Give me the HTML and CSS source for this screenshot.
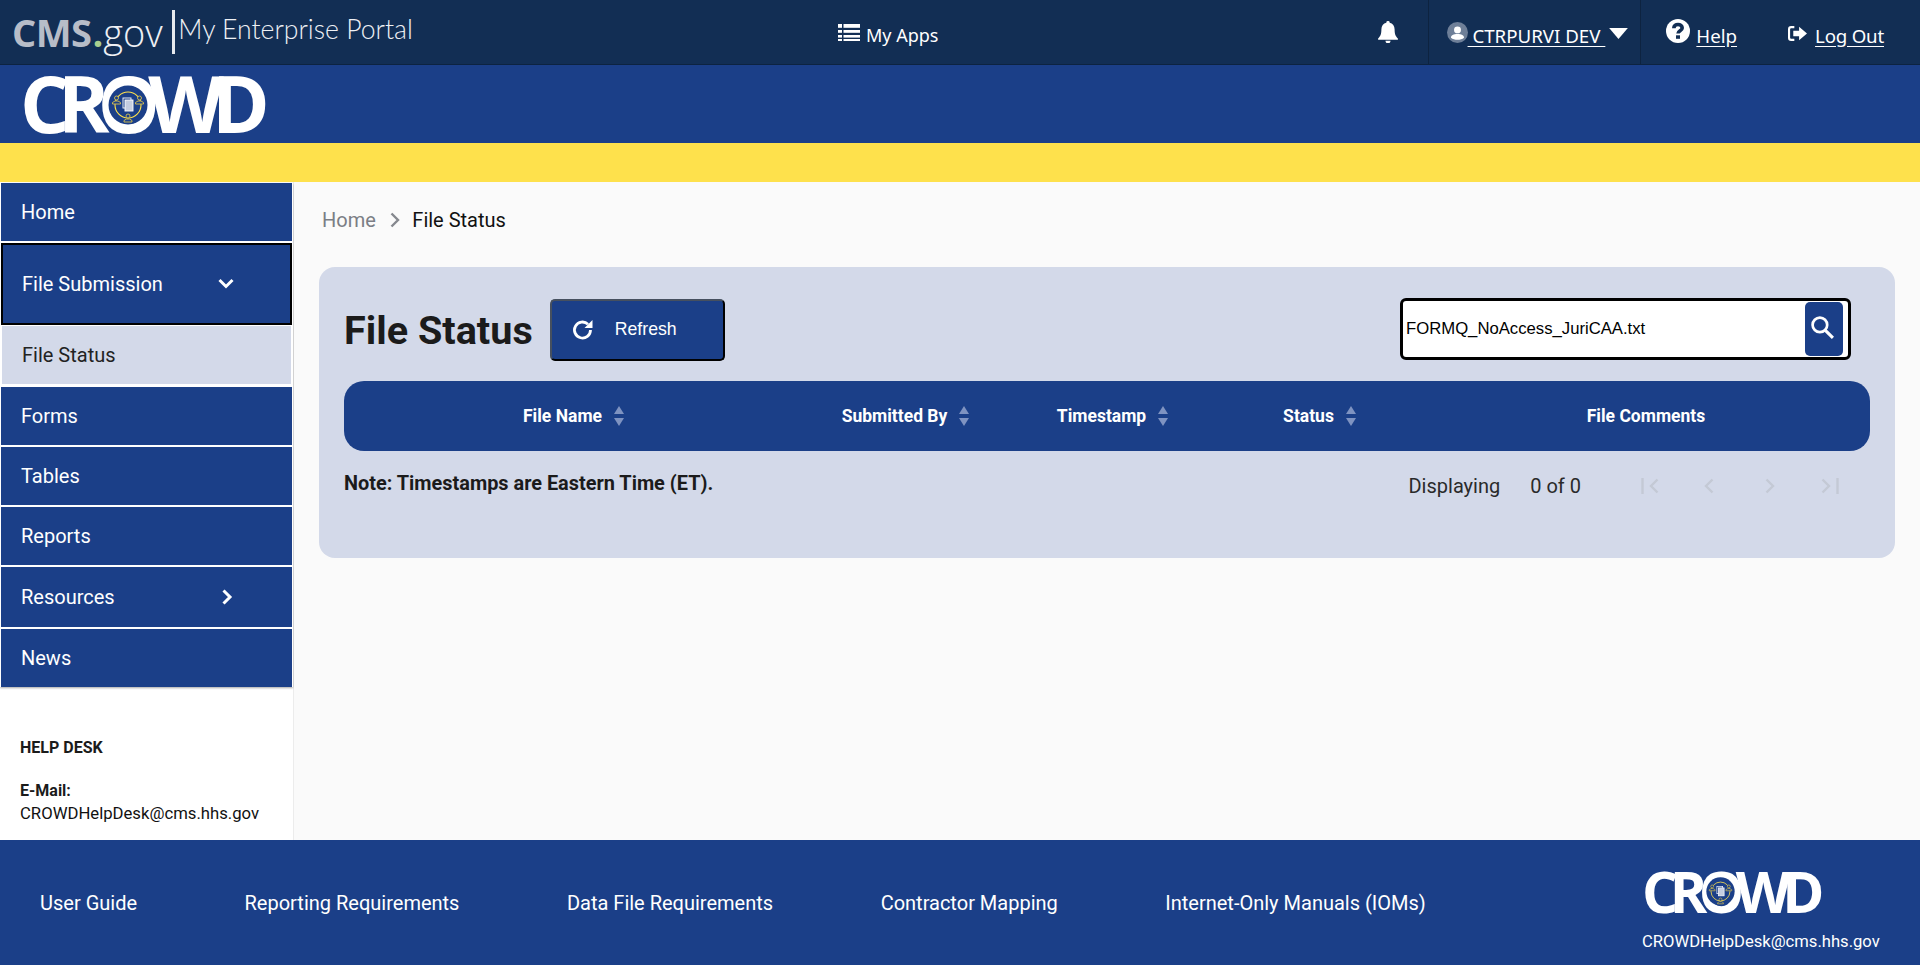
FILE: index.html
```html
<!DOCTYPE html>
<html lang="en">
<head>
<meta charset="utf-8">
<title>File Status</title>
<link rel="stylesheet" href="styles.css">
</head>
<body>
<svg class="defs" width="0" height="0" aria-hidden="true">
  <symbol id="emblem" viewBox="0 0 40 40">
    <circle cx="20" cy="20" r="19.5" fill="#1b3f88"/>
    <circle cx="20" cy="20" r="13" fill="none" stroke="#fee14c" stroke-width="1.100"/>
    <g fill="#1b3f88" stroke="#d9c24f" stroke-width=".9">
      <circle cx="8.5" cy="13" r="2"/><path d="M4.5 19v-1.500l2.500-1.500h3l2.500 1.500V19z"/>
      <circle cx="31.500" cy="13" r="2"/><path d="M27.500 19v-1.500l2.500-1.500h3l2.500 1.500V19z"/>
      <circle cx="20" cy="31" r="2"/><path d="M16 37v-1.500l2.500-1.500h3l2.500 1.500V37z"/>
    </g>
    <rect x="15" y="13" width="8" height="10" fill="none" stroke="#fff" stroke-width=".9"/>
    <rect x="17" y="15" width="8" height="11" fill="#c5cde0" stroke="#fff" stroke-width=".9"/>
  </symbol>
  <symbol id="sort" viewBox="0 0 12 24">
    <path d="M6 2l5 8H1z"/><path d="M1 14h10l-5 8z"/>
  </symbol>
</svg>

<header class="topbar">
  <div class="brand">
    <span class="cms">CMS</span><span class="gov"><span class="dot">.</span>gov</span>
    <span class="brand-sep"></span>
    <span class="portal">My Enterprise Portal</span>
  </div>
  <a class="apps">
    <svg class="apps-icon" viewBox="0 0 22 17" width="22" height="17"><g fill="#fff"><rect x="0" y="0" width="4" height="3.800"/><rect x="5.500" y="0" width="16.500" height="3.800"/><rect x="0" y="6" width="4" height="2.800"/><rect x="5.500" y="6" width="16.500" height="2.800"/><rect x="0" y="11" width="4" height="2.600"/><rect x="5.500" y="11" width="16.500" height="2.600"/><rect x="0" y="15" width="4" height="2"/><rect x="5.500" y="15" width="16.500" height="2"/></g></svg>
    <span>My Apps</span>
  </a>
  <nav class="usernav">
    <span class="bell-cell">
      <svg viewBox="0 0 18 20" width="20" height="22"><path fill="#fff" d="M9 0a1.500 1.500 0 0 1 1.500 1.700C13.300 2.300 15 4.700 15 7.500c0 4.800 1 6.300 3 8.500v1H0v-1c2-2.200 3-3.700 3-8.500 0-2.800 1.700-5.200 4.500-5.800A1.500 1.500 0 0 1 9 0zM6.700 18h4.600a2.300 2.300 0 0 1-4.600 0z"/></svg>
    </span>
    <span class="user-cell">
      <svg class="avatar" viewBox="0 0 20 20" width="21" height="21"><circle cx="10" cy="10" r="10" fill="#6e7f98"/><circle cx="10" cy="7.500" r="3.300" fill="#fff"/><path fill="#fff" d="M3.800 15c0-2.300 2.400-3.500 6.200-3.500s6.200 1.200 6.200 3.500c-1.500 1.300-3.800 2-6.200 2s-4.700-.7-6.200-2z"/></svg>
      <a class="link user-link">&nbsp;CTRPURVI DEV&nbsp;</a>
      <svg class="caret" viewBox="0 0 17 10" width="19" height="11"><path fill="#fff" d="M0 0h17l-8.500 10z"/></svg>
    </span>
    <span class="help-cell">
      <svg class="help-icon" viewBox="0 0 24 24" width="24" height="24"><circle cx="12" cy="12" r="12" fill="#fff"/><path fill="none" stroke="#122e54" stroke-width="3.600" d="M7.800 9.300c0-2.500 1.900-3.800 4.200-3.800s4.200 1.300 4.200 3.400c0 2.900-4.200 2.800-4.200 5.700"/><rect x="10" y="16.300" width="4" height="3.500" fill="#122e54"/></svg>
      <a class="link">Help</a>
    </span>
    <span class="logout-cell">
      <svg class="logout-icon" viewBox="0 0 18 14" width="19" height="15"><path fill="none" stroke="#fff" stroke-width="2" d="M6 1H3a2 2 0 0 0-2 2v8a2 2 0 0 0 2 2h3"/><path fill="#fff" d="M5 4.500h5.500V.5L18 7l-7.500 6.500v-4H5z"/></svg>
      <a class="link">Log Out</a>
    </span>
  </nav>
</header>

<div class="banner">
  <div class="logo logo-lg">
    <span class="logo-text">CROWD</span>
    <svg class="logo-emblem"><use href="#emblem"/></svg>
  </div>
</div>
<div class="stripe"></div>

<div class="body-row">
  <aside class="sidebar">
    <ul class="menu">
      <li class="item">Home</li>
      <li class="item item-open">File Submission
        <svg class="chev" viewBox="0 0 16 11" width="16" height="11"><path fill="none" stroke="#fff" stroke-width="3" d="M1.500 1.500L8 8l6.500-6.500"/></svg>
      </li>
      <li class="subitem">File Status</li>
      <li class="item item-forms">Forms</li>
      <li class="item">Tables</li>
      <li class="item">Reports</li>
      <li class="item item-res">Resources
        <svg class="chev chev-right" viewBox="0 0 11 16" width="11" height="16"><path fill="none" stroke="#fff" stroke-width="3" d="M1.500 1.500L8 8l-6.500 6.500"/></svg>
      </li>
      <li class="item">News</li>
    </ul>
    <div class="helpdesk">
      <p class="help-title">HELP DESK</p>
      <p class="help-label">E-Mail:</p>
      <p class="help-mail">CROWDHelpDesk@cms.hhs.gov</p>
    </div>
  </aside>

  <main class="content">
    <div class="crumbs">
      <span class="crumb-home">Home</span>
      <svg class="crumb-sep" viewBox="0 0 10 16" width="10" height="16"><path fill="none" stroke="#85888e" stroke-width="2.400" d="M1.500 1.500L8 8l-6.500 6.500"/></svg>
      <span class="crumb-cur">File Status</span>
    </div>

    <section class="panel">
      <div class="panel-head">
        <h1 class="title">File Status</h1>
        <button class="refresh" type="button">
          <svg viewBox="0 0 22 22" width="22" height="22"><path fill="none" stroke="#fff" stroke-width="2.800" d="M18.500 11a8 8 0 1 1-2.500-5.800"/><path fill="#fff" d="M20.500 1v8h-8z"/></svg>
          <span>Refresh</span>
        </button>
        <div class="search">
          <input class="search-input" type="text" value="FORMQ_NoAccess_JuriCAA.txt">
          <button class="search-btn" type="button">
            <svg class="search-glyph" viewBox="0 0 24 24" width="25" height="25"><circle cx="9.500" cy="9.500" r="7" fill="none" stroke="#fff" stroke-width="2.600"/><path stroke="#fff" stroke-width="3" d="M14.500 14.500L22 22"/></svg>
          </button>
        </div>
      </div>

      <div class="thead">
        <div class="th">File Name<svg class="sort"><use href="#sort"/></svg></div>
        <div class="th">Submitted By<svg class="sort"><use href="#sort"/></svg></div>
        <div class="th">Timestamp<svg class="sort"><use href="#sort"/></svg></div>
        <div class="th">Status<svg class="sort"><use href="#sort"/></svg></div>
        <div class="th">File Comments</div>
      </div>

      <div class="under">
        <p class="note">Note: Timestamps are Eastern Time (ET).</p>
        <div class="pager">
          <span class="pager-label">Displaying</span>
          <span class="pager-count">0 of 0</span>
          <svg class="pg pg-first" viewBox="0 0 18 16" width="18" height="16"><path fill="none" stroke="#c4c9d5" stroke-width="2.400" d="M1.500 0v16M16.500 1.500L10 8l6.500 6.500"/></svg>
          <svg class="pg pg-prev" viewBox="0 0 11 16" width="11" height="16"><path fill="none" stroke="#c4c9d5" stroke-width="2.400" d="M9.500 1.500L3 8l6.500 6.500"/></svg>
          <svg class="pg pg-next" viewBox="0 0 11 16" width="11" height="16"><path fill="none" stroke="#c4c9d5" stroke-width="2.400" d="M1.500 1.500L8 8l-6.500 6.500"/></svg>
          <svg class="pg pg-last" viewBox="0 0 18 16" width="18" height="16"><path fill="none" stroke="#c4c9d5" stroke-width="2.400" d="M16.500 0v16M1.500 1.500L8 8l-6.500 6.500"/></svg>
        </div>
      </div>
    </section>
  </main>
</div>

<footer class="footer">
  <nav class="foot-links">
    <a>User Guide</a>
    <a>Reporting Requirements</a>
    <a>Data File Requirements</a>
    <a>Contractor Mapping</a>
    <a>Internet-Only Manuals (IOMs)</a>
  </nav>
  <div class="foot-right">
    <div class="logo logo-sm">
      <span class="logo-text">CROWD</span>
      <svg class="logo-emblem"><use href="#emblem"/></svg>
    </div>
    <p class="foot-mail">CROWDHelpDesk@cms.hhs.gov</p>
  </div>
</footer>
</body>
</html>
```

FILE: styles.css
```css
* { box-sizing: border-box; }
html, body { margin: 0; padding: 0; }
body {
  height: 967px;
  overflow: hidden;
  display: flex;
  flex-direction: column;
  background: #fff;
  font-family: Roboto, "Liberation Sans", sans-serif;
  color: #1b1b1b;
}
p, h1, ul { margin: 0; padding: 0; }
.defs { position: absolute; }

/* top bar */
.topbar {
  flex: 0 0 65px;
  display: flex;
  align-items: stretch;
  background: #122e54;
  border-bottom: 1px solid #0d2340;
  color: #fff;
  font-family: "Noto Sans", "Open Sans", sans-serif;
  font-size: 18px;
}
.brand {
  width: 838px;
  display: flex;
  align-items: center;
  padding-left: 12px;
  white-space: nowrap;
}
.cms { font: 700 38px "Open Sans", sans-serif; line-height: 44px; color: #b7bdc8; letter-spacing: -.5px; }
.gov { font: 300 38px "Open Sans", sans-serif; line-height: 44px; color: #eef0f4; margin-left: 1px; }
.dot { color: #a9cf8f; font-weight: 700; }
.brand-sep { width: 3px; height: 44px; background: #e6e9ee; margin: 0 3.500px 0 9px; }
.portal { font: 300 26.600px Lato, sans-serif; color: #eef0f4; position: relative; top: -3px; }
.apps { display: flex; align-items: center; gap: 6px; padding-top: 5px; white-space: nowrap; }
.apps-icon { position: relative; top: -2px; }
.usernav {
  margin-left: auto;
  display: flex;
  align-items: stretch;
  padding-right: 36px;
  font-size: 18.700px;
  white-space: nowrap;
}
.usernav > span { display: flex; align-items: center; }
.link { color: #fff; text-decoration: underline; text-underline-offset: 3px; }
.bell-cell { padding-right: 30px; border-right: 1px solid #0d2340; }
.user-cell { padding: 0 12px 0 18px; border-right: 1px solid #0d2340; }
.user-link { padding-top: 7px; }
.caret { margin-left: 4px; margin-top: 3px; }
.help-cell { padding-left: 25px; }
.help-icon { margin-right: 6px; margin-top: -3px; }
.help-cell .link { padding-top: 7px; }
.logout-cell { padding-left: 51px; }
.logout-icon { margin-right: 8px; margin-top: 3px; }
.logout-cell .link { padding-top: 7px; letter-spacing: -.2px; }

/* logo */
.logo { position: relative; display: block; white-space: nowrap; width: max-content; }
.logo-text {
  font-family: "Open Sans", sans-serif;
  font-weight: 700;
  color: #fff;
  letter-spacing: -.15em;
  display: block;
}
.logo-emblem { position: absolute; }
.logo-lg { font-size: 78px; line-height: 76px; }
.logo-lg .logo-emblem { left: 88px; top: 20px; width: 40px; height: 40px; }
.logo-sm { font-size: 57px; line-height: 52px; }
.logo-sm .logo-emblem { left: 64px; top: 12px; width: 29px; height: 29px; }

/* banner */
.banner { flex: 0 0 78px; background: #1b3f88; padding-left: 20px; }
.stripe { flex: 0 0 39px; background: #fee14c; }

/* layout */
.body-row { flex: 1; display: flex; min-height: 0; }
.sidebar {
  flex: 0 0 294px;
  background: #fff;
  border-right: 1px solid #ececec;
  padding-top: 1px;
}
.menu {
  list-style: none;
  padding: 0 1px 0 1px;
  box-shadow: 0 1px 2px rgba(0,0,0,.35);
}
.item {
  height: 58px;
  margin-bottom: 2px;
  background: #1b3f88;
  color: #fff;
  font-size: 20px;
  display: flex;
  align-items: center;
  padding-left: 20px;
  position: relative;
}
.item:last-child { margin-bottom: 0; }
.item-open {
  height: 82px;
  margin-bottom: 1px;
  border: 2px solid #000;
  padding-left: 19px;
}
.item-res { height: 60px; }
.item-forms { margin-top: 3px; }
.chev { position: absolute; left: 217px; top: 50%; transform: translateY(-50%); }
.item-open .chev { left: 215px; }
.chev-right { left: 221px; }
.subitem {
  height: 58px;
  margin: 0 1px;
  background: #d3d9e9;
  font-size: 20px;
  color: #222;
  display: flex;
  align-items: center;
  padding-left: 20px;
}
.helpdesk { padding: 51px 0 0 20px; font-size: 16.700px; }
.help-title { font-weight: 700; font-size: 16px; line-height: 20px; }
.help-label { font-weight: 700; font-size: 16px; line-height: 20px; margin-top: 23px; }
.help-mail { line-height: 20px; margin-top: 3px; white-space: nowrap; color: #111; }

/* content */
.content { flex: 1; background: #fafafa; padding: 0 25px 0 25px; min-width: 0; }
.crumbs {
  height: 76px;
  margin-bottom: 9px;
  display: flex;
  align-items: center;
  font-size: 20px;
  padding: 0 0 0 3px;
}
.crumb-home { color: #7b7e85; }
.crumb-sep { margin: 0 12.500px 0 14px; }
.crumb-cur { color: #111; }

.panel { height: 291px; background: #d3d9e9; border-radius: 16px; padding: 31px 25px 0 25px; }
.panel-head { display: flex; align-items: center; height: 63px; }
.title { font-size: 39.600px; font-weight: 700; color: #1b1b1b; line-height: 1; padding-top: 2px; }
.refresh {
  width: 175px;
  height: 62px;
  margin-left: 17px;
  display: flex;
  align-items: center;
  background: #1b3f88;
  color: #fff;
  border: 2px solid #46505f;
  border-right-color: #000;
  border-bottom-color: #000;
  border-radius: 5px;
  padding: 0 0 0 20px;
  font: 400 17.700px "Liberation Sans", Arial, sans-serif;
  gap: 21px;
}
.search {
  align-self: flex-start;
  margin-left: auto;
  margin-right: 19px;
  width: 451px;
  height: 62px;
  background: #fff;
  border: 3.500px solid #000;
  border-radius: 6px;
  display: flex;
  align-items: center;
  padding: 0 5px 0 3px;
}
.search-input {
  flex: 1;
  min-width: 0;
  border: 0;
  outline: 0;
  padding: 0;
  background: transparent;
  color: #000;
  font: 400 16.700px "Liberation Sans", Arial, sans-serif;
}
.search-btn {
  width: 38px;
  height: 54px;
  padding: 0;
  border: 0;
  border-radius: 5px;
  background: #1b3f88;
  display: flex;
  align-items: center;
  justify-content: center;
}
.search-glyph { margin: -3px 3px 0 0; }

.thead {
  margin-top: 20px;
  height: 70px;
  background: #1b3f88;
  border-radius: 20px;
  display: grid;
  grid-template-columns: 460px 204px 210px 204px 1fr;
  color: #fff;
  font-weight: 700;
  font-size: 17.500px;
}
.th { display: flex; align-items: center; justify-content: center; }
.sort { width: 12px; height: 24px; margin-left: 11px; fill: #7f93c1; }

.under { display: flex; justify-content: space-between; padding-top: 20px; }
.note { font-size: 19.900px; font-weight: 700; color: #1b1b1b; line-height: 24px; margin-top: 1px; }
.pager { display: flex; align-items: center; font-size: 20px; color: #2a2a2a; margin-right: 31px; height: 30px; }
.pager-count { margin-left: 30px; }
.pg-first { margin-left: 60px; }
.pg-prev { margin-left: 44px; }
.pg-next { margin-left: 51px; }
.pg-last { margin-left: 45px; }

/* footer */
.footer {
  flex: 0 0 125px;
  margin-bottom: 2px;
  background: #1b3f88;
  color: #fff;
  display: flex;
  padding-left: 40px;
}
.foot-links { display: flex; align-items: center; gap: 107.500px; font-size: 20px; }
.foot-right { margin-left: auto; padding: 25px 30px 0 0; width: 278px; }
.foot-mail { font-size: 16.600px; margin-top: 15px; white-space: nowrap; }
```
